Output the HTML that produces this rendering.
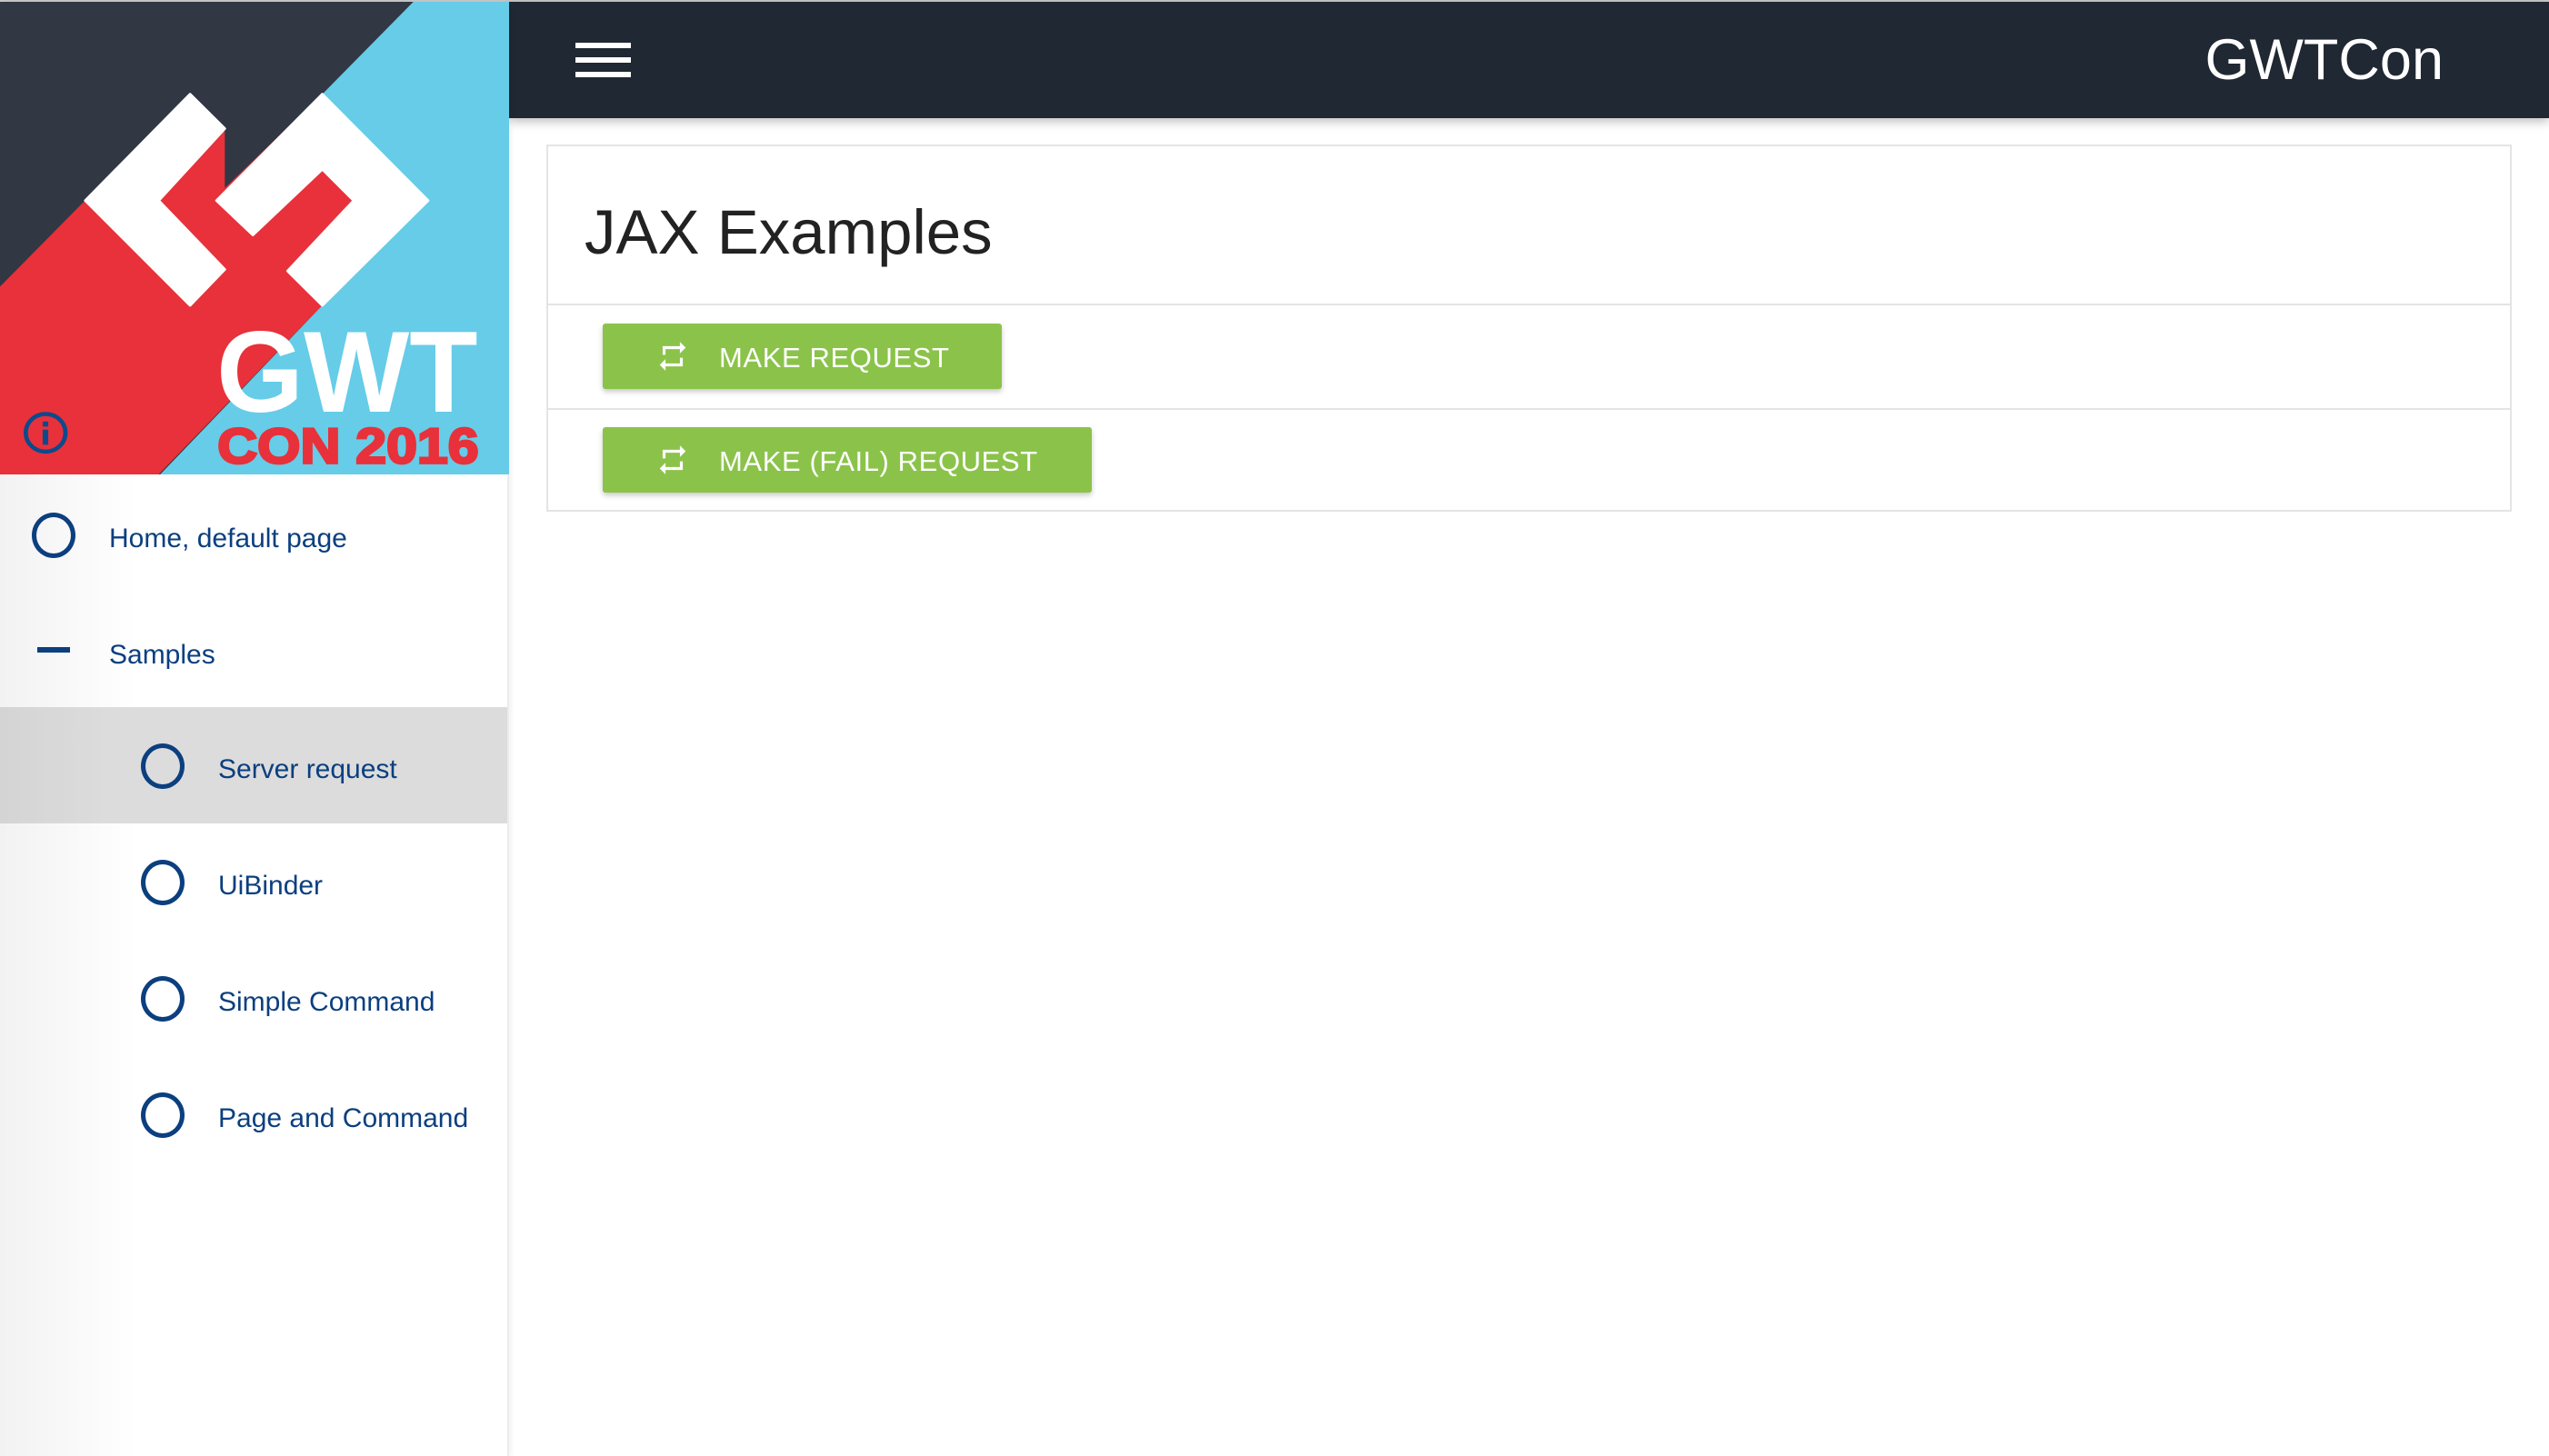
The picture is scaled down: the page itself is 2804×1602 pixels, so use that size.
<!DOCTYPE html>
<html><head><meta charset="utf-8"><style>
*{margin:0;padding:0;box-sizing:border-box}
html,body{width:2804px;height:1602px;overflow:hidden;background:#fff;font-family:"Liberation Sans",Arial,sans-serif}
.top{position:absolute;left:0;top:0;width:2804px;height:2px;background:#c8c8c8}
.hdr{position:absolute;left:560px;top:2px;width:2244px;height:128px;background:#1f2833;box-shadow:0 4px 10px rgba(0,0,0,.25)}
.bar{position:absolute;left:73px;width:61px;height:6px;background:#fff}
.brand{position:absolute;right:116px;top:28px;color:#fff;font-size:63px;letter-spacing:0px}
.side{position:absolute;left:0;top:2px;width:560px;height:1600px;background:linear-gradient(to right,#f2f2f2 0,#ffffff 150px);border-right:2px solid #ececec;box-shadow:2px 0 6px rgba(0,0,0,.06)}
.logo{position:absolute;left:0;top:0}
.item{position:absolute;left:0;width:558px;height:128px;color:#0b3f7f;font-size:30px}
.item .t{position:absolute;top:52px}
.circ{position:absolute;width:48px;height:50px;border:5px solid #0b3f7f;border-radius:50%;top:40px}
.card{position:absolute;left:601px;top:159px;width:2162px;height:404px;border:2px solid #e4e4e4;background:#fff}
.title{position:absolute;left:40px;top:55px;font-size:69px;color:#222}
.hr{position:absolute;left:0;width:100%;height:2px;background:#e4e4e4}
.btn{position:absolute;left:60px;height:72px;background:#8bc34a;border-radius:3px;box-shadow:0 3px 6px rgba(0,0,0,.22);color:#fff;font-size:31px;letter-spacing:0.6px}
.btn svg{position:absolute;left:58px;top:17px}
.btn span{position:absolute;left:128px;top:20px}
</style></head><body>
<div class="top"></div>
<div class="hdr">
<div class="bar" style="top:45px"></div><div class="bar" style="top:61px"></div><div class="bar" style="top:77px"></div>
<div class="brand">GWTCon</div>
</div>
<div class="side">
<svg class="logo" width="560" height="520" viewBox="0 5 1540 1510" preserveAspectRatio="none">
<rect x="0" y="0" width="1540" height="1520" fill="#313743"/>
<polygon points="0,915 575,300 680,410 680,600 975,300 1295,640 975,975 480,1515 0,1515" fill="#e8313a"/>
<polygon points="1255,0 1540,0 1540,1520 480,1520 975,975 1295,640 975,300" fill="#66cce8"/>
<polygon points="575,300 680,410 480,640 680,860 575,975 258,640" fill="#fff" stroke="#fff" stroke-width="8" stroke-linejoin="round"/>
<polygon points="975,300 1295,640 975,975 870,865 1070,640 975,540 765,750 655,640" fill="#fff" stroke="#fff" stroke-width="8" stroke-linejoin="round"/>
<text x="655" y="1315" font-family="Liberation Sans,sans-serif" font-weight="bold" font-size="370" fill="#fff" textLength="790" lengthAdjust="spacingAndGlyphs">GWT</text>
<text x="658" y="1478" font-family="Liberation Sans,sans-serif" font-weight="bold" font-size="160" fill="#e8313a" stroke="#e8313a" stroke-width="8" textLength="790" lengthAdjust="spacingAndGlyphs">CON 2016</text>
<circle cx="138" cy="1382" r="60" fill="none" stroke="#0d4a8c" stroke-width="13"/>
<rect x="129" y="1346" width="17" height="16" fill="#0d4a8c"/>
<rect x="129" y="1372" width="17" height="48" fill="#0d4a8c"/>
</svg>
<div class="item" style="top:522px"><div class="circ" style="left:35px"></div><div class="t" style="left:120px">Home, default page</div></div>
<div class="item" style="top:650px"><div style="position:absolute;left:41px;top:60px;width:36px;height:6px;background:#0b3f7f"></div><div class="t" style="left:120px">Samples</div></div>
<div class="item" style="top:776px;background:linear-gradient(to right,#d4d4d4,#dcdcdc 120px)"><div class="circ" style="left:155px"></div><div class="t" style="left:240px">Server request</div></div>
<div class="item" style="top:904px"><div class="circ" style="left:155px"></div><div class="t" style="left:240px">UiBinder</div></div>
<div class="item" style="top:1032px"><div class="circ" style="left:155px"></div><div class="t" style="left:240px">Simple Command</div></div>
<div class="item" style="top:1160px"><div class="circ" style="left:155px"></div><div class="t" style="left:240px">Page and Command</div></div>
</div>
<div class="card">
<div class="title">JAX Examples</div>
<div class="hr" style="top:173px"></div>
<div class="hr" style="top:288px"></div>
<div class="btn" style="top:195px;width:439px"><svg width="38" height="38" viewBox="0 0 24 24"><path fill="#fff" d="M7 7h10v3l4-4-4-4v3H5v6h2V7zm10 10H7v-3l-4 4 4 4v-3h12v-6h-2v4z"/></svg><span>MAKE REQUEST</span></div>
<div class="btn" style="top:309px;width:538px"><svg width="38" height="38" viewBox="0 0 24 24"><path fill="#fff" d="M7 7h10v3l4-4-4-4v3H5v6h2V7zm10 10H7v-3l-4 4 4 4v-3h12v-6h-2v4z"/></svg><span>MAKE (FAIL) REQUEST</span></div>
</div>
</body></html>
